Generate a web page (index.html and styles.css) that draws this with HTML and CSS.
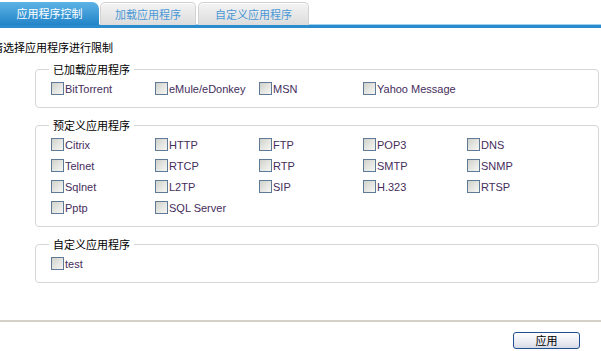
FILE: index.html
```html
<!DOCTYPE html>
<html lang="zh-CN">
<head>
    <meta charset="UTF-8">
    <meta name="viewport" content="width=device-width, initial-scale=1.0">
    <title>应用程序控制</title>
    <link rel="stylesheet" href="styles.css">
</head>
<body>
    <div class="tabs">
        <div class="tab active">应用程序控制</div>
        <div class="tab tab-load">加载应用程序</div>
        <div class="tab tab-custom">自定义应用程序</div>
    </div>

    <div class="hint">请选择应用程序进行限制</div>

    <div class="content">
        <fieldset>
            <legend>已加载应用程序</legend>
            <div class="grid">
                <label class="item"><input type="checkbox">BitTorrent</label>
                <label class="item"><input type="checkbox">eMule/eDonkey</label>
                <label class="item"><input type="checkbox">MSN</label>
                <label class="item"><input type="checkbox">Yahoo Message</label>
            </div>
        </fieldset>

        <fieldset>
            <legend>预定义应用程序</legend>
            <div class="grid">
                <label class="item"><input type="checkbox">Citrix</label>
                <label class="item"><input type="checkbox">HTTP</label>
                <label class="item"><input type="checkbox">FTP</label>
                <label class="item"><input type="checkbox">POP3</label>
                <label class="item"><input type="checkbox">DNS</label>
                <label class="item"><input type="checkbox">Telnet</label>
                <label class="item"><input type="checkbox">RTCP</label>
                <label class="item"><input type="checkbox">RTP</label>
                <label class="item"><input type="checkbox">SMTP</label>
                <label class="item"><input type="checkbox">SNMP</label>
                <label class="item"><input type="checkbox">Sqlnet</label>
                <label class="item"><input type="checkbox">L2TP</label>
                <label class="item"><input type="checkbox">SIP</label>
                <label class="item"><input type="checkbox">H.323</label>
                <label class="item"><input type="checkbox">RTSP</label>
                <label class="item"><input type="checkbox">Pptp</label>
                <label class="item"><input type="checkbox">SQL Server</label>
            </div>
        </fieldset>

        <fieldset>
            <legend>自定义应用程序</legend>
            <div class="grid">
                <label class="item"><input type="checkbox">test</label>
            </div>
        </fieldset>
    </div>

    <div class="footer">
        <button class="apply">应用</button>
    </div>
</body>
</html>
```

FILE: styles.css
```css
body {
    margin: 0;
    background: #fff;
    font-family: "Liberation Sans", Arial, "Noto Sans CJK SC", sans-serif;
    font-size: 11px;
    color: #000;
    overflow: hidden;
}
.tabs {
    display: flex;
    align-items: flex-end;
    height: 25px;
    border-bottom: 3px solid #2a8ccc;
    box-shadow: 0 -1px 0 #9fd0ef inset;
}
.tab {
    height: 22px;
    line-height: 22px;
    text-align: center;
    font-family: "Noto Sans CJK SC", sans-serif;
    font-size: 11px;
    color: #4a98d6;
    background: linear-gradient(#f4f4f4, #dcdcdc);
    border: 1px solid #d2d2d2;
    border-bottom: none;
    border-radius: 5px 5px 0 0;
    box-shadow: inset 0 1px 0 #fff;
}
.tab.active {
    width: 99px;
    height: 23px;
    line-height: 23px;
    color: #fff;
    background: linear-gradient(#5db3e6, #2284c8);
    border: none;
    border-radius: 0 7px 0 0;
    box-shadow: none;
}
.tab-load {
    width: 94px;
    margin-left: 1px;
}
.tab-custom {
    width: 109px;
    margin-left: 2px;
}
.hint {
    margin: 13px 0 0 -8px;
    line-height: 13px;
    font-family: "Noto Sans CJK SC", sans-serif;
}
.content {
    padding: 9px 2px 0 35px;
}
fieldset {
    margin: 0 0 11px;
    padding: 2px 0 8px 15px;
    border: 1px solid #d6d6d6;
    border-radius: 4px;
}
fieldset:last-child {
    margin-bottom: 0;
}
legend {
    margin-left: -2px;
    padding: 0 4px;
    line-height: 13px;
    font-family: "Noto Sans CJK SC", sans-serif;
    font-size: 11px;
}
.grid {
    display: grid;
    grid-template-columns: repeat(5, 104px);
    grid-auto-rows: 21px;
}
.item {
    display: flex;
    align-items: center;
    color: #452d5c;
    white-space: nowrap;
}
.item input {
    appearance: none;
    width: 13px;
    height: 13px;
    margin: 0 1px 0 0;
    border: 1px solid #5f7a96;
    background: linear-gradient(135deg, #d2d2cc, #f6f6f4);
}
.footer {
    margin-top: 37px;
    border-top: 2px solid #d4d0c8;
    display: flex;
    justify-content: flex-end;
    padding: 10px 21px 0 0;
}
.apply {
    width: 67px;
    height: 17px;
    padding: 0;
    font-family: "Noto Sans CJK SC", sans-serif;
    font-size: 11px;
    line-height: 15px;
    color: #000;
    background: linear-gradient(#ffffff, #e6e8f0 70%, #d6dae6);
    border: 1px solid #1f4f8f;
    border-radius: 3px;
}
```
